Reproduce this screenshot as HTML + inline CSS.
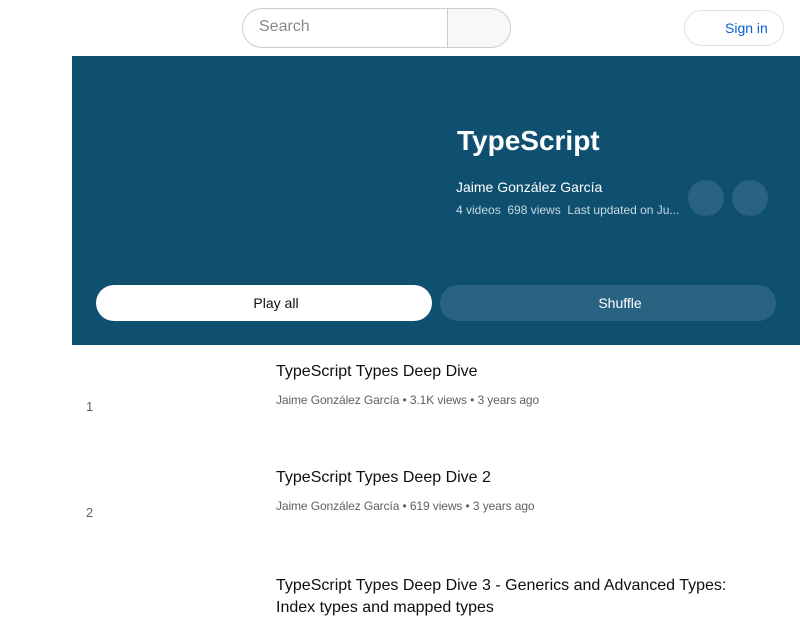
<!DOCTYPE html>
<html><head><meta charset="utf-8"><style>
*{margin:0;padding:0;box-sizing:border-box}
body{width:800px;height:600px;overflow:hidden;background:#fff;font-family:"Liberation Sans",Arial,sans-serif;position:relative}
.a{position:absolute}
</style></head><body>
<div class="a" style="left:242px;top:8px;width:206px;height:40px;border:1px solid #ccc;border-right:none;border-radius:20px 0 0 20px;"></div>
<div class="a" style="left:259px;top:18px;font-size:16px;color:#888">Search</div>
<div class="a" style="left:447px;top:8px;width:64px;height:40px;border:1px solid #ccc;border-radius:0 20px 20px 0;background:#f8f8f8"></div>
<div class="a" style="left:684px;top:10px;width:100px;height:36px;border:1px solid #e0e0e0;border-radius:18px;"></div>
<div class="a" style="left:725px;top:20px;font-size:14px;color:#065fd4">Sign in</div>
<div class="a" style="left:72px;top:56px;width:728px;height:289px;background:#0f5071"></div>
<div class="a" style="left:457px;top:125px;font-size:28px;font-weight:bold;color:#fff">TypeScript</div>
<div class="a" style="left:456px;top:179px;font-size:14px;color:#fff">Jaime González García</div>
<div class="a" style="left:456px;top:203px;font-size:12px;color:#c8d8e2">4 videos&nbsp;&nbsp;698 views&nbsp;&nbsp;Last updated on Ju...</div>
<div class="a" style="left:688px;top:180px;width:36px;height:36px;border-radius:50%;background:#2a6382"></div>
<div class="a" style="left:732px;top:180px;width:36px;height:36px;border-radius:50%;background:#2a6382"></div>
<div class="a" style="left:96px;top:285px;width:336px;height:36px;border-radius:18px;background:#fff;text-align:center;line-height:36px;font-size:14px;color:#0f0f0f;padding-left:24px">Play all</div>
<div class="a" style="left:440px;top:285px;width:336px;height:36px;border-radius:18px;background:#2a6382;text-align:center;line-height:36px;font-size:14px;color:#fff;padding-left:24px">Shuffle</div>
<div class="a" style="left:86px;top:399px;font-size:13px;color:#606060">1</div>
<div class="a" style="left:276px;top:363px;font-size:16px;color:#0f0f0f">TypeScript Types Deep Dive</div>
<div class="a" style="left:276px;top:393px;font-size:12px;color:#606060;letter-spacing:-0.1px">Jaime González García • 3.1K views • 3 years ago</div>
<div class="a" style="left:86px;top:505px;font-size:13px;color:#606060">2</div>
<div class="a" style="left:276px;top:469px;font-size:16px;color:#0f0f0f">TypeScript Types Deep Dive 2</div>
<div class="a" style="left:276px;top:499px;font-size:12px;color:#606060;letter-spacing:-0.1px">Jaime González García • 619 views • 3 years ago</div>
<div class="a" style="left:276px;top:575px;font-size:16px;color:#0f0f0f;width:480px;line-height:22px">TypeScript Types Deep Dive 3 - Generics and Advanced Types: Index types and mapped types</div>
</body></html>
